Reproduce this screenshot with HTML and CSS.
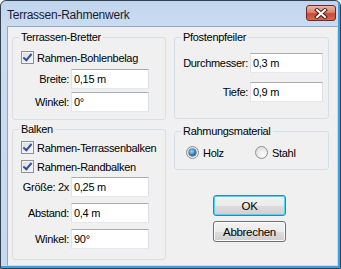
FILE: index.html
```html
<!DOCTYPE html>
<html lang="de">
<head>
    <meta charset="UTF-8">
    <title>Terrassen-Rahmenwerk</title>
    <link rel="stylesheet" href="styles.css">
</head>
<body>

    <div class="window">
        <div class="titlebar">
            <span class="title">Terrassen-Rahmenwerk</span>
            <div class="close">
                <svg width="14" height="11" viewBox="0 0 14 11">
                    <path d="M3 2 L11 9 M11 2 L3 9" stroke="#4a1e1a" stroke-width="4" stroke-linecap="square"/>
                    <path d="M3 2 L11 9 M11 2 L3 9" stroke="#fff" stroke-width="2" stroke-linecap="square"/>
                </svg>
            </div>
        </div>

        <div class="client">
            <div class="column">
                <fieldset class="group bretter">
                    <legend>Terrassen-Bretter</legend>
                    <div class="check-row">
                        <span class="checkbox"></span>Rahmen-Bohlenbelag
                    </div>
                    <div class="field"><label>Breite:</label><input value="0,15 m"></div>
                    <div class="field"><label>Winkel:</label><input value="0°"></div>
                </fieldset>

                <fieldset class="group balken">
                    <legend>Balken</legend>
                    <div class="check-row">
                        <span class="checkbox"></span>Rahmen-Terrassenbalken
                    </div>
                    <div class="check-row">
                        <span class="checkbox"></span>Rahmen-Randbalken
                    </div>
                    <div class="field"><label>Größe: 2x</label><input value="0,25 m"></div>
                    <div class="field"><label>Abstand:</label><input value="0,4 m"></div>
                    <div class="field"><label>Winkel:</label><input value="90°"></div>
                </fieldset>
            </div>

            <div class="column">
                <fieldset class="group pfosten">
                    <legend>Pfostenpfeiler</legend>
                    <div class="field"><label>Durchmesser:</label><input value="0,3 m"></div>
                    <div class="field"><label>Tiefe:</label><input value="0,9 m"></div>
                </fieldset>

                <fieldset class="group material">
                    <legend>Rahmungsmaterial</legend>
                    <div class="radio-row">
                        <span class="radio-item"><span class="radio checked"></span>Holz</span>
                        <span class="radio-item"><span class="radio"></span>Stahl</span>
                    </div>
                </fieldset>

                <div class="buttons">
                    <button class="btn default">OK</button>
                    <button class="btn">Abbrechen</button>
                </div>
            </div>
        </div>
    </div>

</body>
</html>
```

FILE: styles.css
```css
* {
    box-sizing: border-box;
}
body {
    margin: 0;
    font-family: "Liberation Sans", Arial, sans-serif;
    font-size: 11px;
    letter-spacing: -0.3px;
    color: #000;
}
.window {
    width: 341px;
    height: 269px;
    border: 1px solid #34404f;
    border-radius: 6px 6px 0 0;
    background: linear-gradient(#c0d5ee, #cbdcf1 26px, #c6d9ee);
    box-shadow: inset -2px -2px 0 #3c9fdf;
    display: flex;
    flex-direction: column;
}
.titlebar {
    height: 25px;
    display: flex;
    align-items: center;
    padding: 0 4px 0 6px;
}
.title {
    flex: 1;
    font-size: 12px;
    letter-spacing: -0.25px;
    color: #1b1b33;
    padding-top: 2px;
}
.close {
    width: 30px;
    height: 16px;
    margin-top: -1px;
    border: 1px solid #6e2a25;
    border-radius: 3px;
    background: linear-gradient(#eab4a6, #dc8470 45%, #c84b33 55%, #d26c52);
    display: flex;
    align-items: center;
    justify-content: center;
}
.client {
    flex: 1;
    margin: 0 2px 2px 6px;
    background: #f0f0f0;
    border: 1px solid #8ea8c5;
    border-right-color: #cadcf0;
    border-bottom-color: #cadcf0;
    display: flex;
    gap: 8px;
    padding: 4px 8px 0 4px;
}
.column {
    display: flex;
    flex-direction: column;
}
.column:first-child {
    width: 154px;
}
.column:last-child {
    width: 155px;
}
.group {
    margin: 0;
    min-width: 0;
    padding: 0;
    border: 1px solid #d5dfe5;
    border-radius: 3px;
    display: flex;
    flex-direction: column;
}
.group legend {
    margin-left: 6px;
    padding: 0 2px;
    line-height: 13px;
}
.bretter {
    padding: 5px 0 7px;
    gap: 3px;
}
.balken {
    margin-top: 3px;
    padding: 3px 0 10px;
    gap: 6px;
}
.balken .check-row + .check-row {
    margin-top: -4px;
}
.balken .check-row + .field {
    margin-top: -4px;
}
.pfosten {
    padding: 9px 0 16px;
    gap: 9px;
}
.material {
    margin-top: 6px;
    padding: 6px 0 8px;
}
.check-row {
    height: 17px;
    display: flex;
    align-items: center;
    gap: 3px;
    padding-left: 8px;
}
.checkbox {
    width: 13px;
    height: 13px;
    border: 1px solid #8e8f8f;
    background: linear-gradient(135deg, #dcdcdc, #f7f7f7);
    box-shadow: inset 0 0 0 1px #f4f4f4;
    position: relative;
}
.checkbox::after {
    content: "";
    position: absolute;
    left: 3px;
    top: 0px;
    width: 3px;
    height: 7px;
    border: solid #2d4f9e;
    border-width: 0 2px 2px 0;
    transform: rotate(40deg);
}
.field {
    display: flex;
    align-items: center;
    gap: 2px;
}
.field label {
    width: 56px;
    text-align: right;
}
.pfosten .field label {
    width: 73px;
}
.field input {
    width: 78px;
    height: 20px;
    margin: 0;
    padding: 0 2px;
    border: 1px solid;
    border-color: #abadb3 #dbdfe6 #e3e9ef #e2e3ea;
    background: #fff;
    font: inherit;
    letter-spacing: -0.3px;
    color: #000;
    outline: none;
}
.pfosten .field input {
    width: 73px;
}
.radio-row {
    height: 17px;
    display: flex;
    align-items: center;
    padding-left: 11px;
}
.radio-item {
    width: 69px;
    display: flex;
    align-items: center;
    gap: 4px;
}
.radio {
    width: 13px;
    height: 13px;
    border-radius: 50%;
    border: 1px solid #8e8f8f;
    background: radial-gradient(circle at 65% 70%, #fdfdfd, #d6d6d6);
    display: flex;
    align-items: center;
    justify-content: center;
}
.radio.checked::after {
    content: "";
    width: 7px;
    height: 7px;
    border-radius: 50%;
    background: radial-gradient(circle at 40% 35%, #9fe0fb, #2a7ab8 55%, #174a77);
    box-shadow: 0 0 0 0.5px #17426a;
}
.buttons {
    margin-top: 25px;
    padding-left: 39px;
    display: flex;
    flex-direction: column;
    gap: 5px;
}
.btn {
    width: 73px;
    height: 21px;
    margin: 0;
    padding: 0;
    border: 1px solid #707070;
    border-radius: 3px;
    background: linear-gradient(#f2f2f2, #ebebeb 50%, #dddddd 51%, #cfcfcf);
    box-shadow: inset 0 0 0 1px #fbfbfb;
    font: inherit;
    font-size: 11.5px;
    letter-spacing: -0.3px;
    color: #000;
}
.btn.default {
    border-color: #3c7fb1;
    box-shadow: inset 0 0 0 1px #48d8fb;
}
```
